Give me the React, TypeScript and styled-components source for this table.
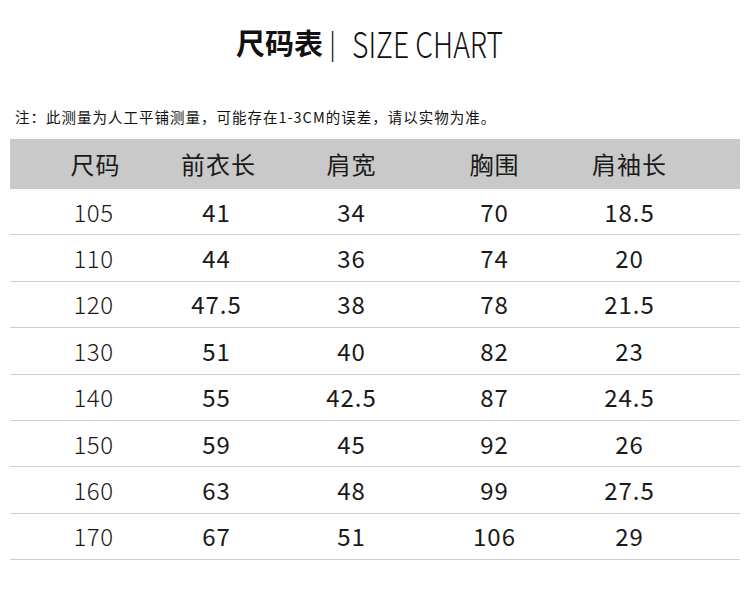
import React from "react";
import styled, { createGlobalStyle } from "styled-components";

const Global = createGlobalStyle`
  html, body { margin: 0; padding: 0; background: #fff; }
  body { font-family: "Noto Sans CJK SC", "Noto Sans", sans-serif; color: #1a1a1a; }
`;

const Page = styled.div`
  width: 750px;
  height: 607px;
  background: #fff;
  display: flex;
  flex-direction: column;
`;

const TitleRow = styled.div`
  height: 84px;
  display: flex;
  align-items: center;
  justify-content: flex-start;
  padding-left: 236px;
  box-sizing: border-box;
`;

const TitleCn = styled.span`
  font-size: 29px;
  font-weight: 700;
  color: #111;
`;

const TitleBar = styled.span`
  font-size: 28px;
  font-weight: 300;
  color: #111;
  margin: 0 16px 0 6px;
`;

const TitleEn = styled.span`
  display: inline-block;
  font-size: 36px;
  font-weight: 300;
  color: #111;
  transform: scaleX(0.785);
  transform-origin: left center;
  width: 150px;
  white-space: nowrap;
`;

const Note = styled.div`
  font-size: 14.5px;
  letter-spacing: 1px;
  color: #111;
  padding-left: 15px;
  height: 55px;
  line-height: 66px;
  white-space: nowrap;
`;

const Table = styled.div`
  margin: 0 10px;
  display: flex;
  flex-direction: column;
`;

const Line = styled.div<{ $head?: boolean }>`
  display: grid;
  grid-template-columns: 170px 72px 198px 88px 182px;
  height: ${(p) => (p.$head ? "50px" : "46.4px")};
  background: ${(p) => (p.$head ? "#c8c9c8" : "transparent")};
  border-bottom: ${(p) => (p.$head ? "none" : "1px solid #cfcfcf")};
  box-sizing: border-box;
  align-items: center;
`;

const Txt = styled.div<{ $light?: boolean; $head?: boolean }>`
  text-align: center;
  white-space: nowrap;
  font-size: 24px;
  line-height: 1;
  font-weight: ${(p) => (p.$light ? 300 : 400)};
  color: #1a1a1a;
  letter-spacing: ${(p) => (p.$light ? "0.5px" : "1px")};
  margin-left: ${(p) => (p.$light ? "-4px" : "0")};
  text-indent: 1px;
`;

const head = ["尺码", "前衣长", "肩宽", "胸围", "肩袖长"];
const rows = [
  ["105", "41", "34", "70", "18.5"],
  ["110", "44", "36", "74", "20"],
  ["120", "47.5", "38", "78", "21.5"],
  ["130", "51", "40", "82", "23"],
  ["140", "55", "42.5", "87", "24.5"],
  ["150", "59", "45", "92", "26"],
  ["160", "63", "48", "99", "27.5"],
  ["170", "67", "51", "106", "29"],
];

export default function App() {
  return (
    <Page>
      <Global />
      <TitleRow>
        <TitleCn>尺码表</TitleCn>
        <TitleBar>|</TitleBar>
        <TitleEn>SIZE CHART</TitleEn>
      </TitleRow>
      <Note>注：此测量为人工平铺测量，可能存在1-3CM的误差，请以实物为准。</Note>
      <Table>
        <Line $head>
          {head.map((h, i) => (
            <Txt key={i} $head>{h}</Txt>
          ))}
        </Line>
        {rows.map((r, i) => (
          <Line key={i}>
            {r.map((v, j) => (
              <Txt key={j} $light={j === 0}>{v}</Txt>
            ))}
          </Line>
        ))}
      </Table>
    </Page>
  );
}
